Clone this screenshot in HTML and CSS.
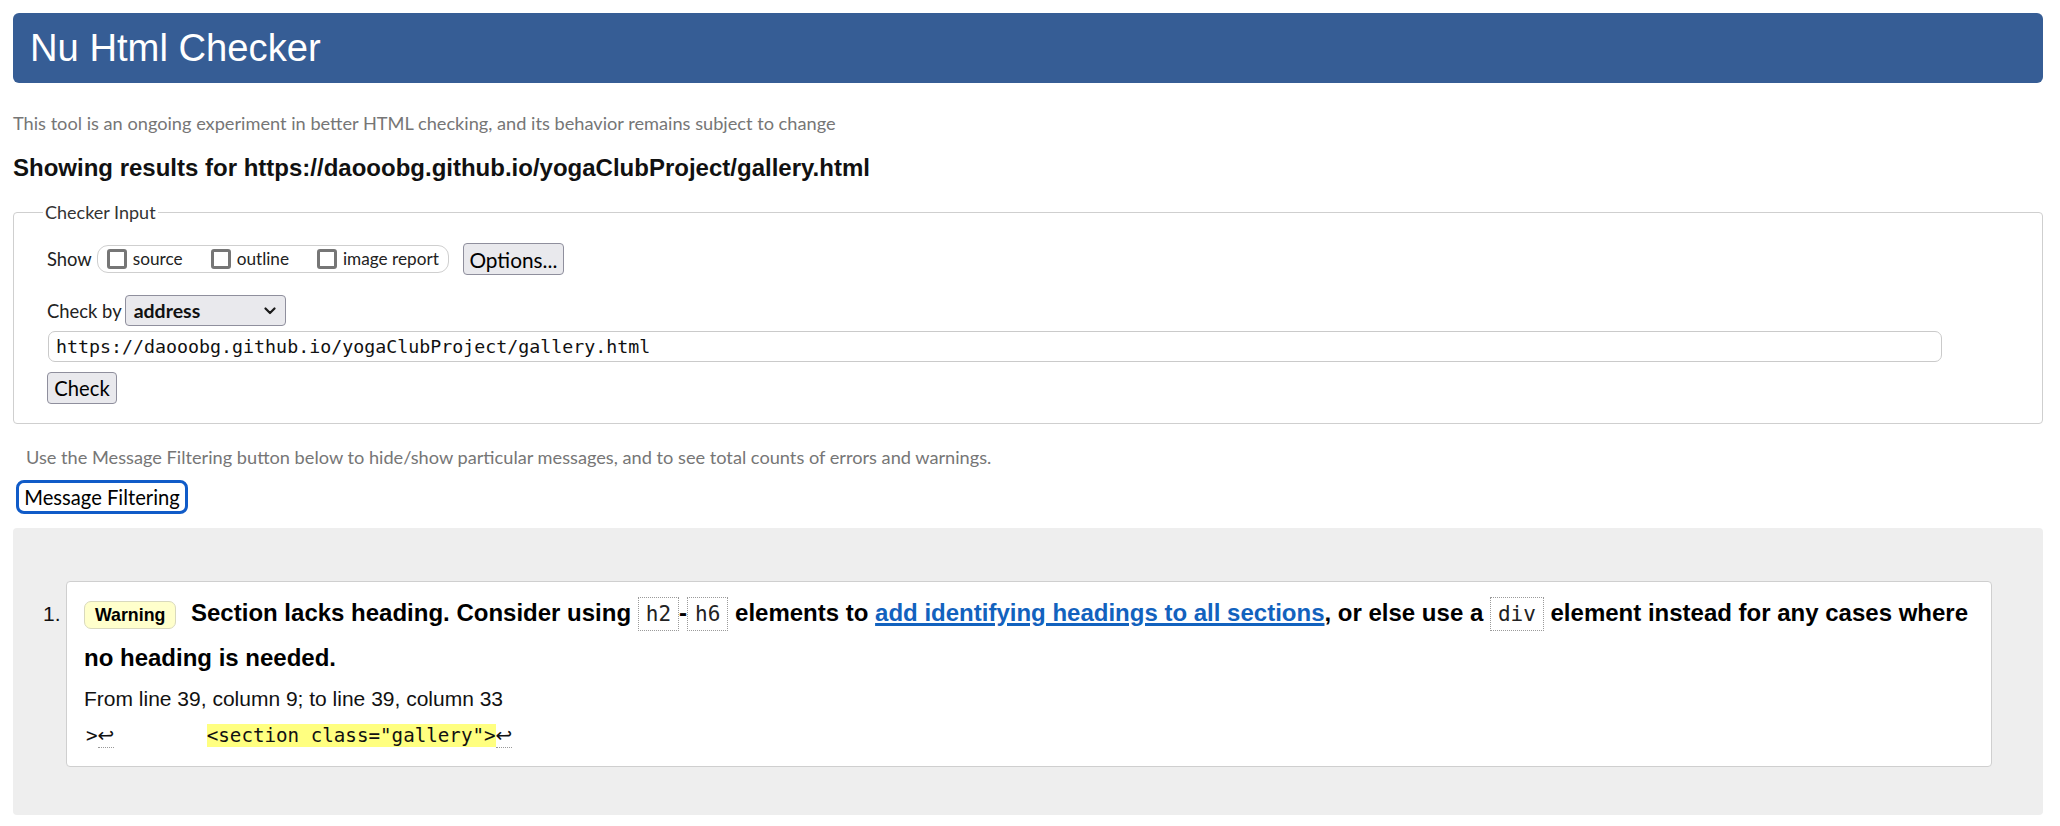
FILE: index.html
```html
<!DOCTYPE html>
<html lang="en">
<head>
<meta charset="utf-8">
<title>Showing results for https://daooobg.github.io/yogaClubProject/gallery.html - Nu Html Checker</title>
<link rel="stylesheet" href="styles.css">
</head>
<body>
<header class="banner"><h1 class="banner-title">Nu Html Checker</h1></header>
<p class="intro">This tool is an ongoing experiment in better HTML checking, and its behavior remains subject to change</p>
<h2 class="results-for">Showing results for https://daooobg.github.io/yogaClubProject/gallery.html</h2>
<fieldset class="checker">
  <legend class="checker-legend">Checker Input</legend>
  <div class="row row-show">
    <span class="field-label">Show</span>
    <span class="opts">
      <span class="opt"><span class="cb"></span><span class="opt-text">source</span></span>
      <span class="opt"><span class="cb"></span><span class="opt-text">outline</span></span>
      <span class="opt"><span class="cb"></span><span class="opt-text">image report</span></span>
    </span>
    <span class="btn btn-options">Options...</span>
  </div>
  <div class="row row-by">
    <span class="field-label">Check by</span>
    <span class="select"><span class="select-value">address</span><svg class="chev" width="12" height="8" viewBox="0 0 12 8"><polyline points="1.5,1.5 6,6 10.5,1.5" fill="none" stroke="#1b1b1b" stroke-width="2.2" stroke-linecap="round" stroke-linejoin="round"/></svg></span>
  </div>
  <div class="url">https://daooobg.github.io/yogaClubProject/gallery.html</div>
  <div class="row row-check"><span class="btn btn-check">Check</span></div>
</fieldset>
<p class="filter-hint">Use the Message Filtering button below to hide/show particular messages, and to see total counts of errors and warnings.</p>
<div class="filter-row"><span class="btn btn-filter">Message Filtering</span></div>
<div class="results">
  <div class="message">
    <div class="msg-number">1.</div>
    <div class="msg-card">
      <p class="msg-text"><span class="badge">Warning</span> Section lacks heading. Consider using <code class="tok">h2</code>-<code class="tok">h6</code> elements to <a class="msg-link" href="#">add identifying headings to all sections</a>, or else use a <code class="tok">div</code> element instead for any cases where no heading is needed.</p>
      <p class="location">From line 39, column 9; to line 39, column 33</p>
      <p class="extract">&gt;<span class="lf">↩</span>        <mark class="hl">&lt;section class="gallery"&gt;</mark><span class="lf">↩</span></p>
    </div>
  </div>
</div>
</body>
</html>
```

FILE: styles.css
```css
html { background: #fff; }
body {
  margin: 0;
  padding: 13px 17px 0 13px;
  font-family: "Liberation Sans", Arial, sans-serif;
  color: #111;
}
.banner {
  height: 70px;
  background: #365d95;
  border-radius: 6px;
}
.banner-title {
  margin: 0;
  padding-left: 17px;
  font-size: 38.2px;
  font-weight: normal;
  line-height: 70px;
  color: #fff;
}
.intro {
  margin: 29px 0 0 0;
  font-family: Lato, "Noto Sans", sans-serif;
  font-size: 18.2px;
  line-height: 22px;
  color: #767676;
}
.results-for {
  margin: 20px 0 0 0;
  font-size: 24px;
  line-height: 28px;
  font-weight: bold;
  color: #111;
}
.checker {
  margin: 19px 0 0 0;
  padding: 20px 20px 19px 33px;
  border: 1px solid #cfcfcf;
  border-radius: 4px;
  font-family: Lato, "Noto Sans", sans-serif;
  font-size: 18.4px;
  color: #222;
}
.checker-legend {
  margin-left: -4px;
  padding: 0 2px;
  font-size: 18px;
  line-height: 22px;
  color: #333;
}
.row {
  display: flex;
  align-items: center;
}
.row-show { height: 32px; }
.row-by { height: 31px; margin-top: 20px; }
.row-check { height: 32px; margin-top: 10px; }
.field-label { line-height: 22px; }
.opts {
  display: flex;
  align-items: center;
  gap: 28px;
  height: 26px;
  margin-left: 5px;
  padding: 0 9px;
  border: 1px solid #cfcfcf;
  border-radius: 11px;
}
.opt {
  display: flex;
  align-items: center;
  gap: 6px;
}
.cb {
  box-sizing: border-box;
  width: 20px;
  height: 20px;
  border: 3px solid #767676;
  border-radius: 3px;
  background: #fff;
}
.opt-text {
  font-size: 17.2px;
  line-height: 22px;
}
.btn {
  display: inline-flex;
  align-items: center;
  justify-content: center;
  box-sizing: border-box;
  background: #e9e9ed;
  border: 1px solid #8f8f9d;
  border-radius: 4px;
  font-family: Lato, "Noto Sans", sans-serif;
  font-size: 20.2px;
  color: #000;
}
.btn-options {
  width: 101px;
  height: 32px;
  margin-left: 14px;
  font-size: 20.8px;
}
.select {
  display: flex;
  align-items: center;
  justify-content: space-between;
  box-sizing: border-box;
  width: 161px;
  height: 31px;
  margin-left: 3px;
  padding: 0 9px 0 8px;
  background: #e9e9ed;
  border: 1px solid #8f8f9d;
  border-radius: 4px;
}
.select-value {
  font-size: 19.5px;
  font-weight: bold;
  color: #111;
}
.chev { display: block; }
.url {
  box-sizing: border-box;
  width: 1894px;
  height: 31px;
  margin: 5px 0 0 1px;
  padding-left: 7px;
  border: 1px solid #cacaca;
  border-radius: 7px;
  font-family: "DejaVu Sans Mono", monospace;
  font-size: 18.3px;
  line-height: 29px;
  color: #111;
}
.btn-check {
  width: 70px;
  height: 32px;
}
.filter-hint {
  margin: 23px 0 0 13px;
  font-family: Lato, "Noto Sans", sans-serif;
  font-size: 18.2px;
  line-height: 20px;
  color: #767676;
}
.filter-row {
  display: flex;
  margin: 13px 0 0 3px;
}
.btn-filter {
  width: 172px;
  height: 34px;
  background: #fff;
  border: 3px solid #105bc8;
  border-radius: 8px;
}
.results {
  margin-top: 14px;
  padding: 53px 51px 48px 30px;
  background: #eee;
  border-radius: 4px;
}
.message {
  display: flex;
  align-items: baseline;
}
.msg-number {
  width: 23px;
  flex: none;
  font-size: 21px;
  color: #111;
}
.msg-card {
  flex: 1;
  padding: 9px 12px 15px 17px;
  background: #fff;
  border: 1px solid #cfcfcf;
  border-radius: 4px;
}
.msg-text {
  margin: 0;
  font-size: 24px;
  font-weight: bold;
  line-height: 44px;
  color: #000;
}
.badge {
  display: inline-block;
  margin-right: 8px;
  padding: 0 10px;
  font-size: 17.75px;
  line-height: 26px;
  background: #ffffcc;
  border: 1px solid #d9d9bd;
  border-radius: 7px;
}
.tok {
  padding: 4px 7px;
  font-family: "DejaVu Sans Mono", monospace;
  font-size: 21px;
  font-weight: normal;
  color: #222;
  border: 1px dotted #9a9a9a;
}
.msg-link {
  color: #1262be;
  text-decoration: underline;
  text-decoration-thickness: 2.5px;
  text-underline-offset: 2px;
}
.location {
  margin: 4px 0 0 0;
  font-size: 21px;
  line-height: 30px;
  color: #111;
}
.extract {
  margin: 6px 0 0 2px;
  font-family: "DejaVu Sans Mono", monospace;
  font-size: 19.2px;
  line-height: 30px;
  white-space: pre;
  color: #111;
}
.lf {
  font-family: "DejaVu Sans", sans-serif;
  font-size: 20px;
  border-bottom: 1px dotted #999;
}
.hl {
  background: #ffff80;
  color: #111;
}
```
